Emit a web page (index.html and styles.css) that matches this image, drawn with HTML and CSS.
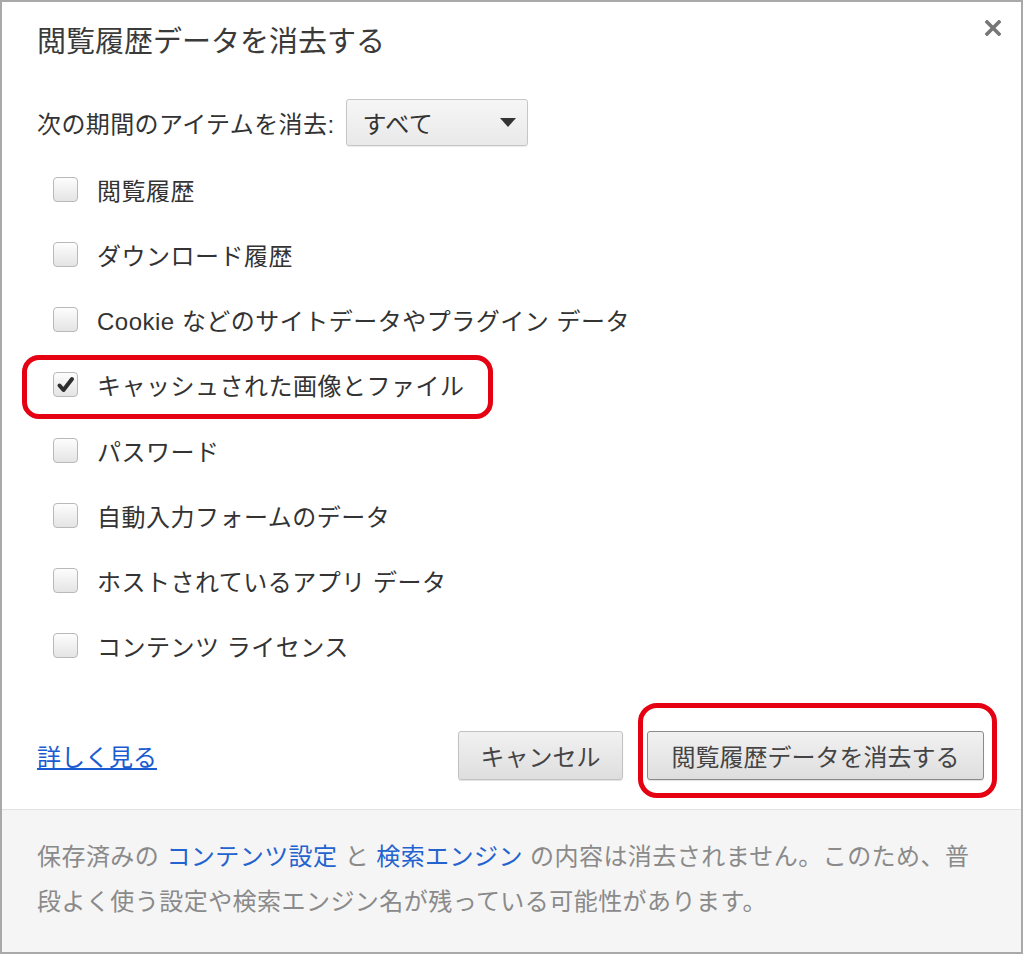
FILE: index.html
```html
<!DOCTYPE html>
<html lang="ja">
<head>
    <meta charset="UTF-8">
    <title>閲覧履歴データを消去する</title>
    <link rel="stylesheet" href="styles.css">
</head>
<body>
    <div class="dialog">
        <div class="main">
            <h1 class="title">閲覧履歴データを消去する</h1>
            <button class="close" aria-label="閉じる">
                <svg width="16" height="16" viewBox="0 0 16 16">
                    <path d="M2 2 L14 14 M14 2 L2 14" stroke="#777" stroke-width="3.6" stroke-linecap="square"/>
                </svg>
            </button>

            <div class="period">
                <span>次の期間のアイテムを消去:</span>
                <div class="select">
                    <span>すべて</span>
                    <span class="arrow"></span>
                </div>
            </div>

            <ul class="items">
                <li><span class="box"></span>閲覧履歴</li>
                <li><span class="box"></span>ダウンロード履歴</li>
                <li><span class="box"></span>Cookie などのサイトデータやプラグイン データ</li>
                <li class="marked">
                    <span class="box checked">
                        <svg width="22" height="22" viewBox="0 0 22 22">
                            <path d="M4.5 11.5 L8.5 16 L17 5" fill="none" stroke="#2e2e2e" stroke-width="4" stroke-linecap="round" stroke-linejoin="round"/>
                        </svg>
                    </span>キャッシュされた画像とファイル
                </li>
                <li><span class="box"></span>パスワード</li>
                <li><span class="box"></span>自動入力フォームのデータ</li>
                <li><span class="box"></span>ホストされているアプリ データ</li>
                <li><span class="box"></span>コンテンツ ライセンス</li>
            </ul>

            <div class="actions">
                <a href="#" class="more">詳しく見る</a>
                <div class="buttons">
                    <button class="btn">キャンセル</button>
                    <button class="btn primary marked-btn">閲覧履歴データを消去する</button>
                </div>
            </div>
        </div>

        <div class="footer">
            保存済みの <a href="#">コンテンツ設定</a> と <a href="#">検索エンジン</a> の内容は消去されません。このため、普<br>段よく使う設定や検索エンジン名が残っている可能性があります。
        </div>
    </div>
</body>
</html>
```

FILE: styles.css
```css
body {
    margin: 0;
    background: #fff;
    font-family: "Liberation Sans", "Noto Sans CJK JP", sans-serif;
    color: #333;
}
.dialog {
    box-sizing: border-box;
    width: 1023px;
    height: 954px;
    border: 2px solid #a9a9a9;
    display: flex;
    flex-direction: column;
    background: #fff;
}
.main {
    position: relative;
    padding: 22px 37px 0 35px;
}
.title {
    margin: 0;
    font-size: 29px;
    font-weight: normal;
    line-height: 36px;
    color: #3a3a3a;
}
.close {
    position: absolute;
    top: 18px;
    right: 20px;
    padding: 0;
    border: none;
    background: none;
    width: 16px;
    height: 16px;
}
.close svg {
    display: block;
}
.period {
    display: flex;
    align-items: center;
    margin-top: 39px;
    height: 47px;
    font-size: 24px;
    letter-spacing: 0.4px;
}
.select {
    box-sizing: border-box;
    width: 182px;
    height: 47px;
    margin-left: 12px;
    padding: 0 11px 0 15px;
    display: flex;
    align-items: center;
    justify-content: space-between;
    border: 1px solid #c6c6c6;
    border-radius: 3px;
    background: linear-gradient(#f6f6f6, #e9e9e9);
    box-shadow: 0 1px 1px rgba(0, 0, 0, 0.08);
}
.arrow {
    width: 0;
    height: 0;
    border-left: 8px solid transparent;
    border-right: 8px solid transparent;
    border-top: 9px solid #333;
}
.items {
    list-style: none;
    margin: 11px 0 0;
    padding: 0;
}
.items li {
    position: relative;
    display: flex;
    align-items: center;
    height: 65.15px;
    padding-left: 16px;
    font-size: 24px;
    letter-spacing: 0.5px;
}
.box {
    box-sizing: border-box;
    width: 25px;
    height: 25px;
    margin-right: 19px;
    border: 1px solid #b9b9b9;
    border-radius: 4px;
    background: linear-gradient(#fdfdfd, #e4e4e4);
    display: flex;
    align-items: center;
    justify-content: center;
}
.box svg {
    display: block;
}
.marked::after {
    content: "";
    position: absolute;
    left: -15px;
    top: 3px;
    box-sizing: border-box;
    width: 471px;
    height: 64px;
    border: 5px solid #e50012;
    border-radius: 17px;
}
.actions {
    display: flex;
    justify-content: space-between;
    align-items: center;
    margin-top: 53px;
}
.more {
    font-size: 24px;
    color: #1a5bd1;
    text-decoration: underline;
}
.buttons {
    display: flex;
    gap: 24px;
}
.btn {
    box-sizing: border-box;
    height: 49px;
    padding: 0 20px;
    font-family: inherit;
    font-size: 24px;
    color: #444;
    border: 1px solid #c2c2c2;
    border-radius: 3px;
    background: linear-gradient(#f1f1f1, #e6e6e6 60%, #dedede);
    box-shadow: 0 1px 1px rgba(0, 0, 0, 0.12);
}
.btn:first-child {
    width: 165px;
}
.primary {
    width: 337px;
    border-color: #8a8a8a;
}
.marked-btn {
    position: relative;
}
.marked-btn::after {
    content: "";
    position: absolute;
    left: -10px;
    top: -29px;
    box-sizing: border-box;
    width: 359px;
    height: 95px;
    border: 5px solid #e50012;
    border-radius: 19px;
}
.footer {
    flex: 1;
    margin-top: 29px;
    padding: 24px 35px 0;
    border-top: 1px solid #e2e2e2;
    background: #f5f5f5;
    font-size: 24px;
    line-height: 45px;
    letter-spacing: 0.45px;
    color: #8a8a8a;
}
.footer a {
    color: #2363cf;
    text-decoration: none;
}
```
